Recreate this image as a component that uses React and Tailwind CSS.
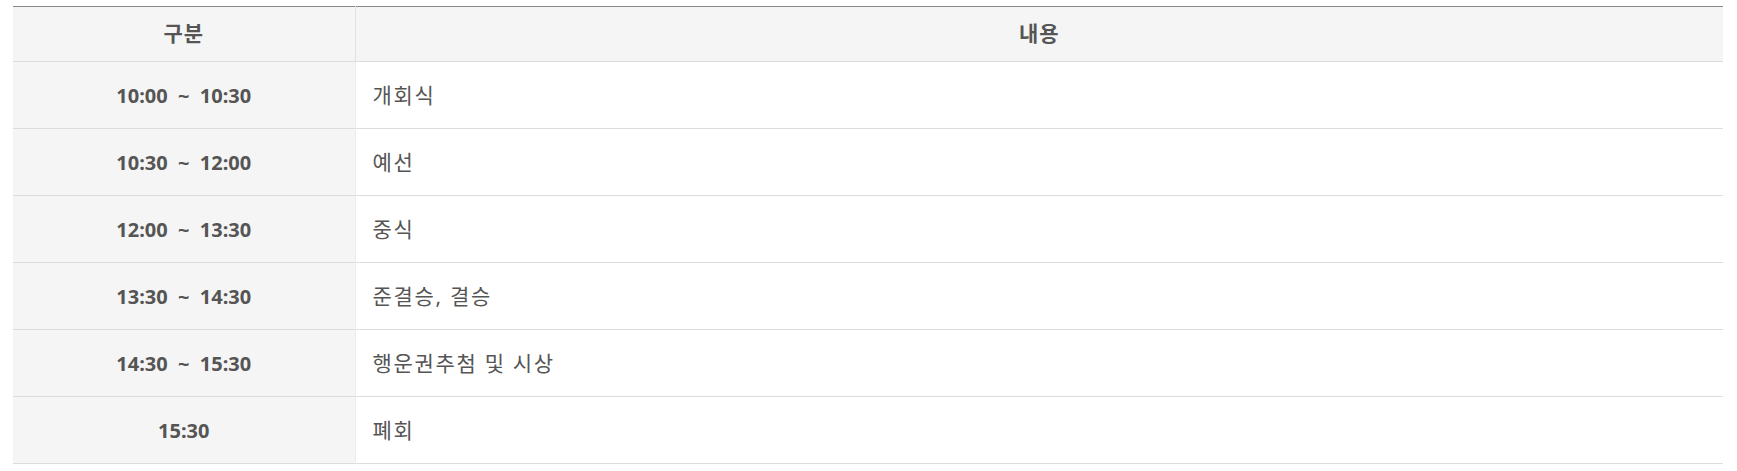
export default function App() {
  const rows = [
    ["10:00 ~ 10:30", "개회식"],
    ["10:30 ~ 12:00", "예선"],
    ["12:00 ~ 13:30", "중식"],
    ["13:30 ~ 14:30", "준결승, 결승"],
    ["14:30 ~ 15:30", "행운권추첨 및 시상"],
    ["15:30", "폐회"],
  ];
  return (
    <div
      className="bg-white pt-[6px] pl-[13px] pr-[14px] text-[#555]"
      style={{ fontFamily: '"Noto Sans", "Noto Sans CJK KR", sans-serif' }}
    >
      <table className="w-full border-collapse border-t border-t-[#888] text-[20px]">
        <thead>
          <tr className="h-[55px] bg-[#f5f5f5] border-b border-b-[#dcdcdc]">
            <th className="w-[342px] border-r border-r-[#e2e2e2] font-bold text-center text-[21px] tracking-[0.05em]">구분</th>
            <th className="font-bold text-center text-[21px] tracking-[0.05em]">내용</th>
          </tr>
        </thead>
        <tbody>
          {rows.map(([t, c]) => (
            <tr key={t} className="h-[67px] border-b border-b-[#dcdcdc]">
              <td className="bg-[#f5f5f5] border-r border-r-[#ececec] text-center font-bold whitespace-pre pt-[2px]">
                {t.replace(" ~ ", "  ~  ")}
              </td>
              <td className="pl-[17px] pt-[2px] text-left text-[21px] tracking-[0.08em]">{c}</td>
            </tr>
          ))}
        </tbody>
      </table>
    </div>
  );
}
